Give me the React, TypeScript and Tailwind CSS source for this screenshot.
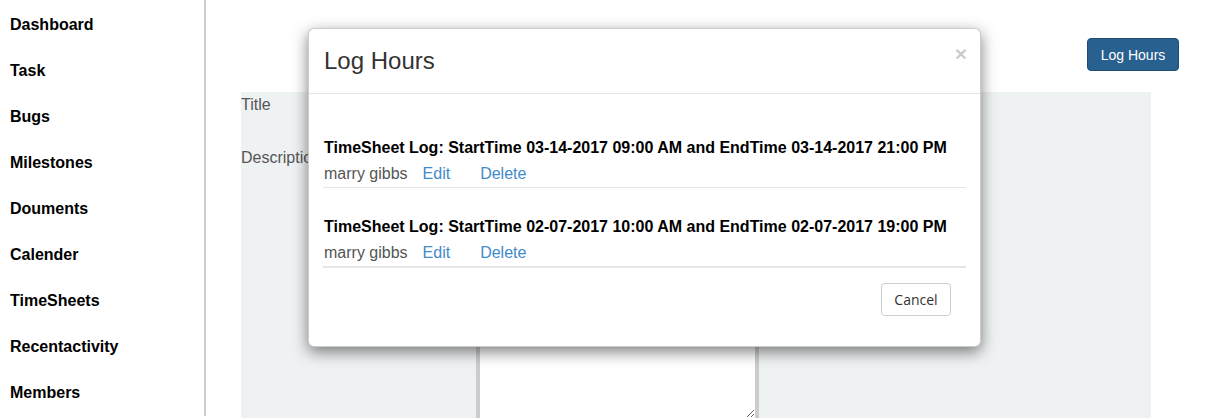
const navItems = [
  "Dashboard",
  "Task",
  "Bugs",
  "Milestones",
  "Douments",
  "Calender",
  "TimeSheets",
  "Recentactivity",
  "Members",
];

const logs = [
  { start: "03-14-2017 09:00 AM", end: "03-14-2017 21:00 PM", user: "marry gibbs" },
  { start: "02-07-2017 10:00 AM", end: "02-07-2017 19:00 PM", user: "marry gibbs" },
];

const LogHoursModal = () => {
  return (
    <div className="absolute left-[308px] top-[28px] w-[673px] rounded-[6px] border border-black/20 bg-white shadow-[0_5px_15px_rgba(0,0,0,0.5)]">
      <div className="flex h-[65px] items-center justify-between border-b border-[#e5e5e5] pl-[15px] pr-[13px]">
        <h4 className="text-[24px] leading-[26px] text-[#333]">Log Hours</h4>
        <button className="-mt-[16px] text-[21px] font-bold leading-none text-black opacity-20">
          ×
        </button>
      </div>
      <div className="px-[14px] pt-[43px]">
        {logs.map((log, i) => (
          <div
            key={i}
            className={
              i === 0
                ? "border-b border-[#e5e5e5] pb-[2px] pl-[1px]"
                : "mt-[28px] border-b-2 border-[#e5e5e5] pb-[2px] pl-[1px]"
            }
          >
            <div className="text-[16px] font-bold leading-[22px] text-black">
              TimeSheet Log: StartTime {log.start} and EndTime {log.end}
            </div>
            <div className="mt-[4px] flex text-[16px] leading-[22px]">
              <span className="text-[#555]">{log.user}</span>
              <a className="ml-[15px] text-[#428bca]">Edit</a>
              <a className="ml-[30px] text-[#428bca]">Delete</a>
            </div>
          </div>
        ))}
      </div>
      <div className="flex justify-end pb-[30px] pr-[29px] pt-[15px]">
        <button className="h-[33px] w-[70px] rounded-[4px] border border-[#ccc] bg-white font-['Open_Sans',sans-serif] text-[14px] text-[#333]">
          Cancel
        </button>
      </div>
    </div>
  );
};

export default function App() {
  return (
    <div className="relative flex h-[418px] w-full overflow-hidden bg-white font-['Liberation_Sans',Arial,sans-serif]">
      <aside className="h-[416px] w-[206px] shrink-0 border-r-2 border-[#ccc]">
        <ul className="flex flex-col pl-[10px] pt-[2px]">
          {navItems.map((item) => (
            <li
              key={item}
              className="flex h-[46px] items-center text-[16px] font-bold text-black"
            >
              {item}
            </li>
          ))}
        </ul>
      </aside>
      <main className="flex-1 pt-[38px]">
        <div className="flex justify-end pr-[30px]">
          <button className="h-[33px] w-[92px] rounded-[4px] border border-[#204d74] bg-[#286090] pt-[1px] text-[14px] text-white">
            Log Hours
          </button>
        </div>
        <div className="ml-[35px] mr-[58px] mt-[21px] h-[400px] bg-[#eff2f3] pt-[4px]">
          <div className="text-[16px] leading-[18px] text-[#555]">Title</div>
          <div className="mt-[35px] flex">
            <div className="w-[235px] text-[16px] leading-[18px] text-[#555]">
              Description
            </div>
            <textarea className="-mt-[7px] h-[280px] w-[283px] border-4 border-[#ccc] bg-white" />
          </div>
        </div>
      </main>
      <LogHoursModal />
    </div>
  );
}
